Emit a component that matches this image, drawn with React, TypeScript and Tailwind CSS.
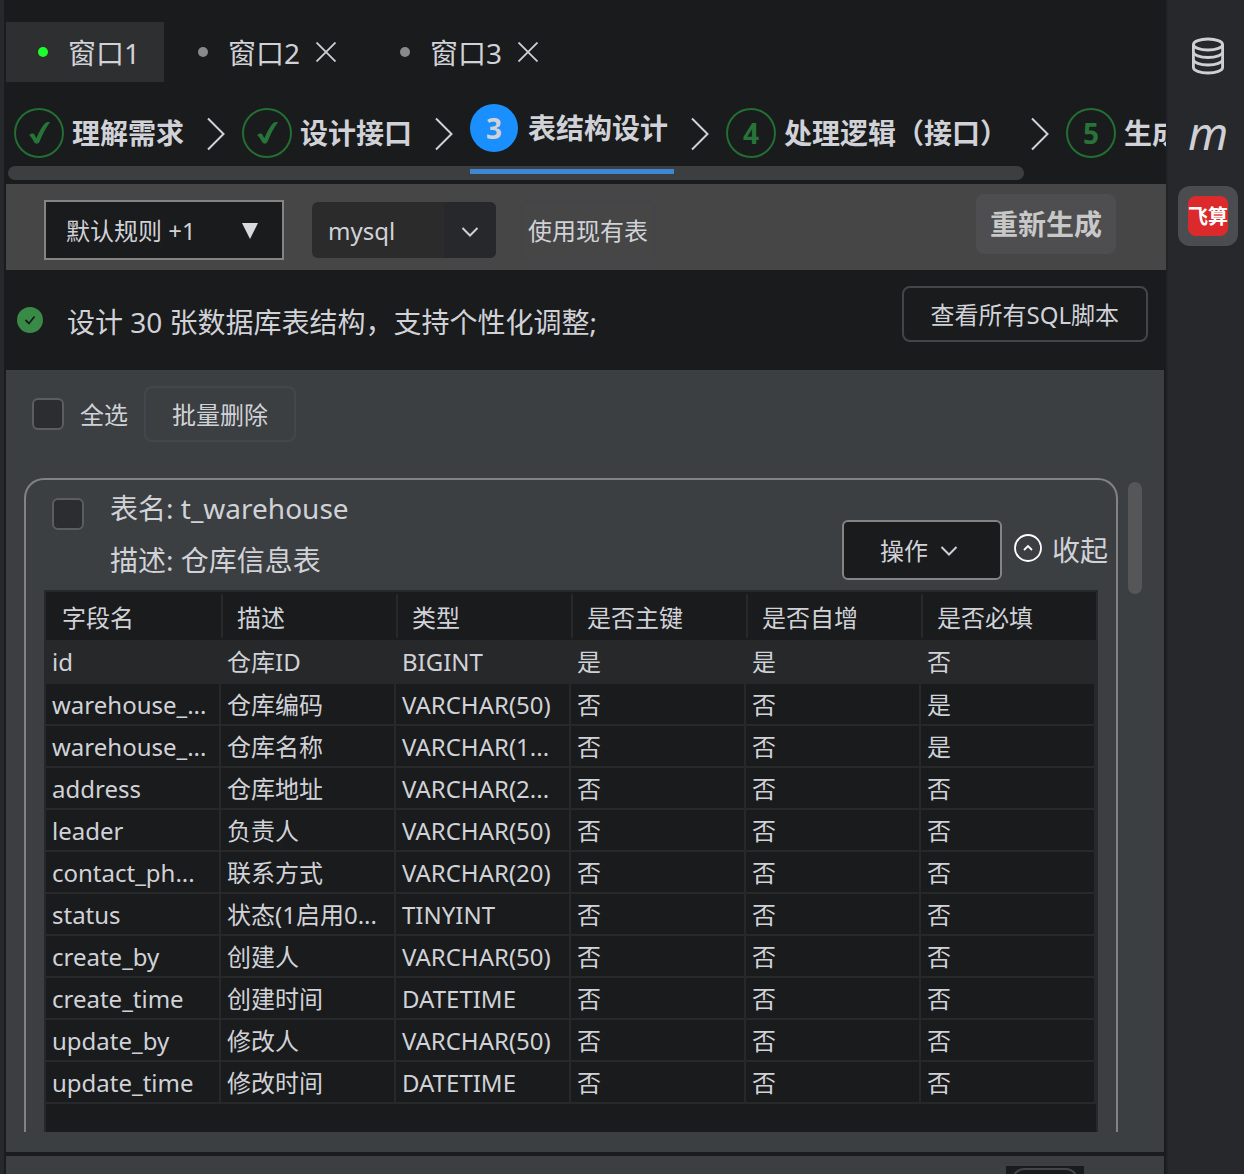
import { FC, ReactNode, useState } from "react";

type StepState = "done" | "active" | "todo";

const tabs = [
  { name: "窗口1", closable: false },
  { name: "窗口2", closable: true },
  { name: "窗口3", closable: true },
];

const steps: { label: string; state: StepState }[] = [
  { label: "理解需求", state: "done" },
  { label: "设计接口", state: "done" },
  { label: "表结构设计", state: "active" },
  { label: "处理逻辑（接口）", state: "todo" },
  { label: "生成", state: "todo" },
];

const headers = ["字段名", "描述", "类型", "是否主键", "是否自增", "是否必填"];

const rows = [
  ["id", "仓库ID", "BIGINT", "是", "是", "否"],
  ["warehouse_...", "仓库编码", "VARCHAR(50)", "否", "否", "是"],
  ["warehouse_...", "仓库名称", "VARCHAR(1...", "否", "否", "是"],
  ["address", "仓库地址", "VARCHAR(2...", "否", "否", "否"],
  ["leader", "负责人", "VARCHAR(50)", "否", "否", "否"],
  ["contact_ph...", "联系方式", "VARCHAR(20)", "否", "否", "否"],
  ["status", "状态(1启用0...", "TINYINT", "否", "否", "否"],
  ["create_by", "创建人", "VARCHAR(50)", "否", "否", "否"],
  ["create_time", "创建时间", "DATETIME", "否", "否", "否"],
  ["update_by", "修改人", "VARCHAR(50)", "否", "否", "否"],
  ["update_time", "修改时间", "DATETIME", "否", "否", "否"],
];

const Chevron = () => (
  <svg
    width="18"
    height="12"
    viewBox="0 0 18 12"
    fill="none"
    stroke="#ced0d6"
    strokeWidth="2"
  >
    <path d="M1.5 2 9 9.5 16.5 2" />
  </svg>
);

const Checkbox: FC<{ id: string; label?: string }> = ({ id, label }) => (
  <input
    id={id}
    type="checkbox"
    aria-label={label}
    className="size-8 shrink-0 appearance-none rounded-md border-2 border-[#5a5d63] bg-[#2b2d30] checked:bg-[#3574f0]"
  />
);

const StepBadge: FC<{ state: StepState; index: number }> = ({
  state,
  index,
}) => {
  if (state === "active") {
    return (
      <span className="mr-2.5 flex size-12 items-center justify-center rounded-full bg-[#1a8fff]">
        {index}
      </span>
    );
  }
  return (
    <span className="mr-2 flex size-[50px] items-center justify-center rounded-full border-2 border-[#226e33] text-[#267437]">
      {state === "done" ? (
        <svg width="24" height="24" viewBox="0 0 24 24" fill="currentColor">
          <path d="M2.3 14.2C3.4 12 6.6 11.8 7.6 13.8L9.3 17.3C12 11 15 5.4 18 2.3 19.2 1.2 21.6.9 23 1.2 18.6 7 15.4 13.6 12.4 21 11.6 22.8 8.6 23.4 7.4 21.6 5.8 19 4.4 15.8 2.3 14.2Z" />
        </svg>
      ) : (
        index
      )}
    </span>
  );
};

const Steps = () => (
  <nav className="overflow-hidden">
    <ol className="flex h-[84px] items-stretch gap-[17px] pt-[18px] pl-2 text-[28px] font-bold whitespace-nowrap">
      {steps.map((step, i) => (
        <li key={step.label} className="flex shrink-0 gap-[17px]">
          {i > 0 && (
            <svg
              className="mt-[17px]"
              width="18"
              height="34"
              viewBox="0 0 18 34"
              fill="none"
              stroke="#d0d2d8"
              strokeWidth="2"
            >
              <path d="M1 1.5 16.5 17 1 32.5" />
            </svg>
          )}
          <button
            className={
              step.state === "active"
                ? "relative flex items-center pr-1.5 pb-2.5"
                : "flex items-center pr-1.5"
            }
          >
            <StepBadge state={step.state} index={i + 1} />
            {step.label}
            {step.state === "active" && (
              <span className="absolute inset-x-0 -bottom-2 h-[5px] bg-[#3d87d3]" />
            )}
          </button>
        </li>
      ))}
    </ol>
    <div className="mr-[142px] ml-0.5 h-3.5 rounded-full bg-[#3d3e40]" />
  </nav>
);

const Toolbar = () => {
  const [db, setDb] = useState("mysql");

  return (
    <div className="flex h-[86px] items-center bg-[#464646] pt-1.5 pr-[50px] pl-[38px] text-2xl">
      <button className="flex h-[60px] w-60 items-center justify-between border-2 border-[#848484] bg-[#1a1b1c] pt-0.5 pr-6 pl-5">
        默认规则 +1
        <svg width="16" height="16" viewBox="0 0 16 16" fill="#d8dade">
          <path d="M0 0H16L8 16Z" />
        </svg>
      </button>
      <div className="relative ml-7 h-14 w-46">
        <select
          aria-label="数据库类型"
          value={db}
          onChange={(e) => setDb(e.target.value)}
          className="h-full w-full appearance-none rounded-md bg-[#2b2b2b] pt-0.5 pl-4"
        >
          <option value="mysql">mysql</option>
          <option value="oracle">oracle</option>
        </select>
        <span className="pointer-events-none absolute inset-y-0 right-0 flex w-13 items-center justify-center rounded-r-md bg-[#27282c] pt-1">
          <Chevron />
        </span>
      </div>
      <button className="ml-6 h-[60px] rounded-lg border-2 border-[#43454b] px-1.5 pt-0.5">
        使用现有表
      </button>
      <button className="mb-3 ml-auto h-15 rounded-lg bg-[#4e4e50] px-3.5 pt-0.5 text-[28px] font-bold text-[#c8c8c8]">
        重新生成
      </button>
    </div>
  );
};

const FieldTable = () => (
  <div className="mx-[18px] h-[560px] border-2 border-[#26282a] bg-[#1a1b1c]">
    <table className="w-full table-fixed border-separate border-spacing-0 text-left text-2xl">
      <thead>
        <tr className="h-12">
          {headers.map((h, i) => (
            <th key={h} className="p-0 font-normal">
              <div
                className={
                  i === 0
                    ? "pt-1 pl-4 leading-10"
                    : "border-l-2 border-[#26282a] pt-1 pl-3.5 leading-10"
                }
              >
                {h}
              </div>
            </th>
          ))}
        </tr>
      </thead>
      <tbody>
        {rows.map((row, i) => (
          <tr key={i} className={i === 0 ? "h-11 bg-[#26282a]" : "h-[42px]"}>
            {row.map((cell, j) => (
              <td
                key={j}
                className="truncate border-r-2 border-b-2 border-[#26282a] pt-0.5 pr-1 pb-0 pl-1.5 leading-[38px]"
              >
                {cell}
              </td>
            ))}
          </tr>
        ))}
      </tbody>
    </table>
  </div>
);

const TableCard = () => (
  <section className="min-w-0 flex-1 self-start rounded-t-[20px] border-2 border-b-0 border-[#828282]">
    <div className="flex h-[110px]">
      <div className="mt-[18px] ml-[26px]">
        <Checkbox id="warehouse" label="t_warehouse" />
      </div>
      <div className="mt-0.5 ml-[26px] text-[28px] leading-[52px]">
        <p>表名: t_warehouse</p>
        <p>描述: 仓库信息表</p>
      </div>
      <button className="mt-10 ml-auto flex h-[60px] w-40 items-center justify-center gap-3 rounded-md border-2 border-[#848484] bg-[#1a1b1c] pt-0.5 pr-1.5 text-2xl">
        操作
        <Chevron />
      </button>
      <button className="mt-12 mr-2 ml-3 flex h-11 items-center gap-2.5 text-[28px]">
        <svg
          className="mb-1"
          width="28"
          height="28"
          viewBox="0 0 28 28"
          fill="none"
          stroke="#fff"
          strokeWidth="1.8"
        >
          <circle cx="14" cy="14" r="13" />
          <path d="M10 16 14 12 18 16" />
        </svg>
        收起
      </button>
    </div>
    <FieldTable />
  </section>
);

const SideButton: FC<{ label: string; active?: boolean; children: ReactNode }> =
  ({ label, active, children }) => (
    <button
      aria-label={label}
      className={
        active
          ? "flex size-15 items-center justify-center rounded-xl bg-[#4b4c50]"
          : "flex size-15 items-center justify-center"
      }
    >
      {children}
    </button>
  );

const Sidebar = () => (
  <aside className="flex w-[78px] shrink-0 flex-col items-center gap-5 border-l-2 border-[#222327] bg-[#27282c] pt-[26px] pl-1">
    <SideButton label="Database">
      <svg
        width="34"
        height="38"
        viewBox="0 0 34 38"
        fill="none"
        stroke="#ced0d6"
        strokeWidth="2.8"
      >
        <ellipse cx="17" cy="7.5" rx="14.6" ry="5.5" />
        <path d="M2.4 7.5v23c0 3 6.5 5.5 14.6 5.5s14.6-2.5 14.6-5.5v-23" />
        <path d="M2.4 15c0 3 6.5 5.5 14.6 5.5s14.6-2.5 14.6-5.5M2.4 22.5c0 3 6.5 5.5 14.6 5.5s14.6-2.5 14.6-5.5" />
      </svg>
    </SideButton>
    <SideButton label="Maven">
      <span className="pb-2 text-[46px] leading-[60px] text-[#ced0d6] italic">
        m
      </span>
    </SideButton>
    <SideButton label="飞算" active>
      <span className="flex size-10 items-center justify-center rounded-lg bg-[#dc2a2c] pt-0.5 text-xl font-bold whitespace-nowrap text-white">
        飞算
      </span>
    </SideButton>
  </aside>
);

const App = () => {
  const [current, setCurrent] = useState(0);

  return (
    <div
      lang="zh-CN"
      className="flex h-screen overflow-hidden border-l-4 border-[#27282c] bg-[#1a1b1c] font-['Noto_Sans','Noto_Sans_CJK_SC',sans-serif] text-[#d0d2d8]"
    >
      <main className="flex min-w-0 flex-1 flex-col pl-0.5">
        <div className="flex shrink-0 gap-0.5 pt-[22px] text-[28px]">
          {tabs.map((tab, i) => (
            <div
              key={tab.name}
              className={
                i === current
                  ? "flex h-15 items-center bg-[#2e2f31] pr-6 pl-8"
                  : "flex h-15 items-center pr-[30px] pl-8"
              }
            >
              <button
                onClick={() => setCurrent(i)}
                className="flex items-center gap-5"
              >
                <span
                  className={
                    i === current
                      ? "size-2.5 rounded-full bg-[#1cff2c]"
                      : "size-2.5 rounded-full bg-[#8a8a8a]"
                  }
                />
                <span className="pt-0.5">{tab.name}</span>
              </button>
              {tab.closable && (
                <button aria-label={`关闭${tab.name}`} className="ml-4">
                  <svg
                    width="20"
                    height="20"
                    viewBox="0 0 20 20"
                    stroke="#ced0d6"
                    strokeWidth="1.8"
                  >
                    <path d="M.5.5l19 19M19.5.5l-19 19" />
                  </svg>
                </button>
              )}
            </div>
          ))}
        </div>

        <Steps />

        <div className="mt-1 shrink-0">
          <Toolbar />
        </div>

        <div className="flex h-[100px] shrink-0 items-center pr-[18px] pl-[11px]">
          <svg width="26" height="26" viewBox="0 0 26 26" fill="none">
            <circle cx="13" cy="13" r="13" fill="#388a46" />
            <path d="M8.5 13 12 16.5 17.5 9.5" stroke="#1a1b1c" strokeWidth="1.8" />
          </svg>
          <p className="ml-6 pt-1 text-[28px]">
            设计 30 张数据库表结构，支持个性化调整;
          </p>
          <button className="mb-3 ml-auto h-14 rounded-lg border-2 border-[#43454b] px-[27px] pt-0.5 text-2xl">
            查看所有SQL脚本
          </button>
        </div>

        <div className="mr-0.5 flex min-h-0 flex-1 flex-col bg-[#3c3f41] pb-5">
          <div className="flex shrink-0 items-center pt-4 pb-9 pl-[26px] text-2xl">
            <Checkbox id="all" />
            <label htmlFor="all" className="ml-4 pt-0.5">
              全选
            </label>
            <button className="ml-4 h-14 rounded-lg border-2 border-[#43464c] px-[26px] pt-0.5">
              批量删除
            </button>
          </div>
          <div className="flex min-h-0 flex-1 gap-2.5 overflow-hidden pr-[22px] pl-[18px]">
            <TableCard />
            <div className="mt-1 h-28 w-3.5 rounded-full bg-[#555658]" />
          </div>
        </div>

        <div className="mt-1 mr-0.5 flex h-[18px] shrink-0 justify-end overflow-hidden bg-[#3c3f41] pt-2.5 pr-20">
          <div className="h-14 w-[78px] bg-[#1a1b1c] px-1.5 pt-0.5">
            <div className="h-12 rounded-xl border-2 border-[#43454b]" />
          </div>
        </div>
      </main>
      <Sidebar />
    </div>
  );
};

export default App;
